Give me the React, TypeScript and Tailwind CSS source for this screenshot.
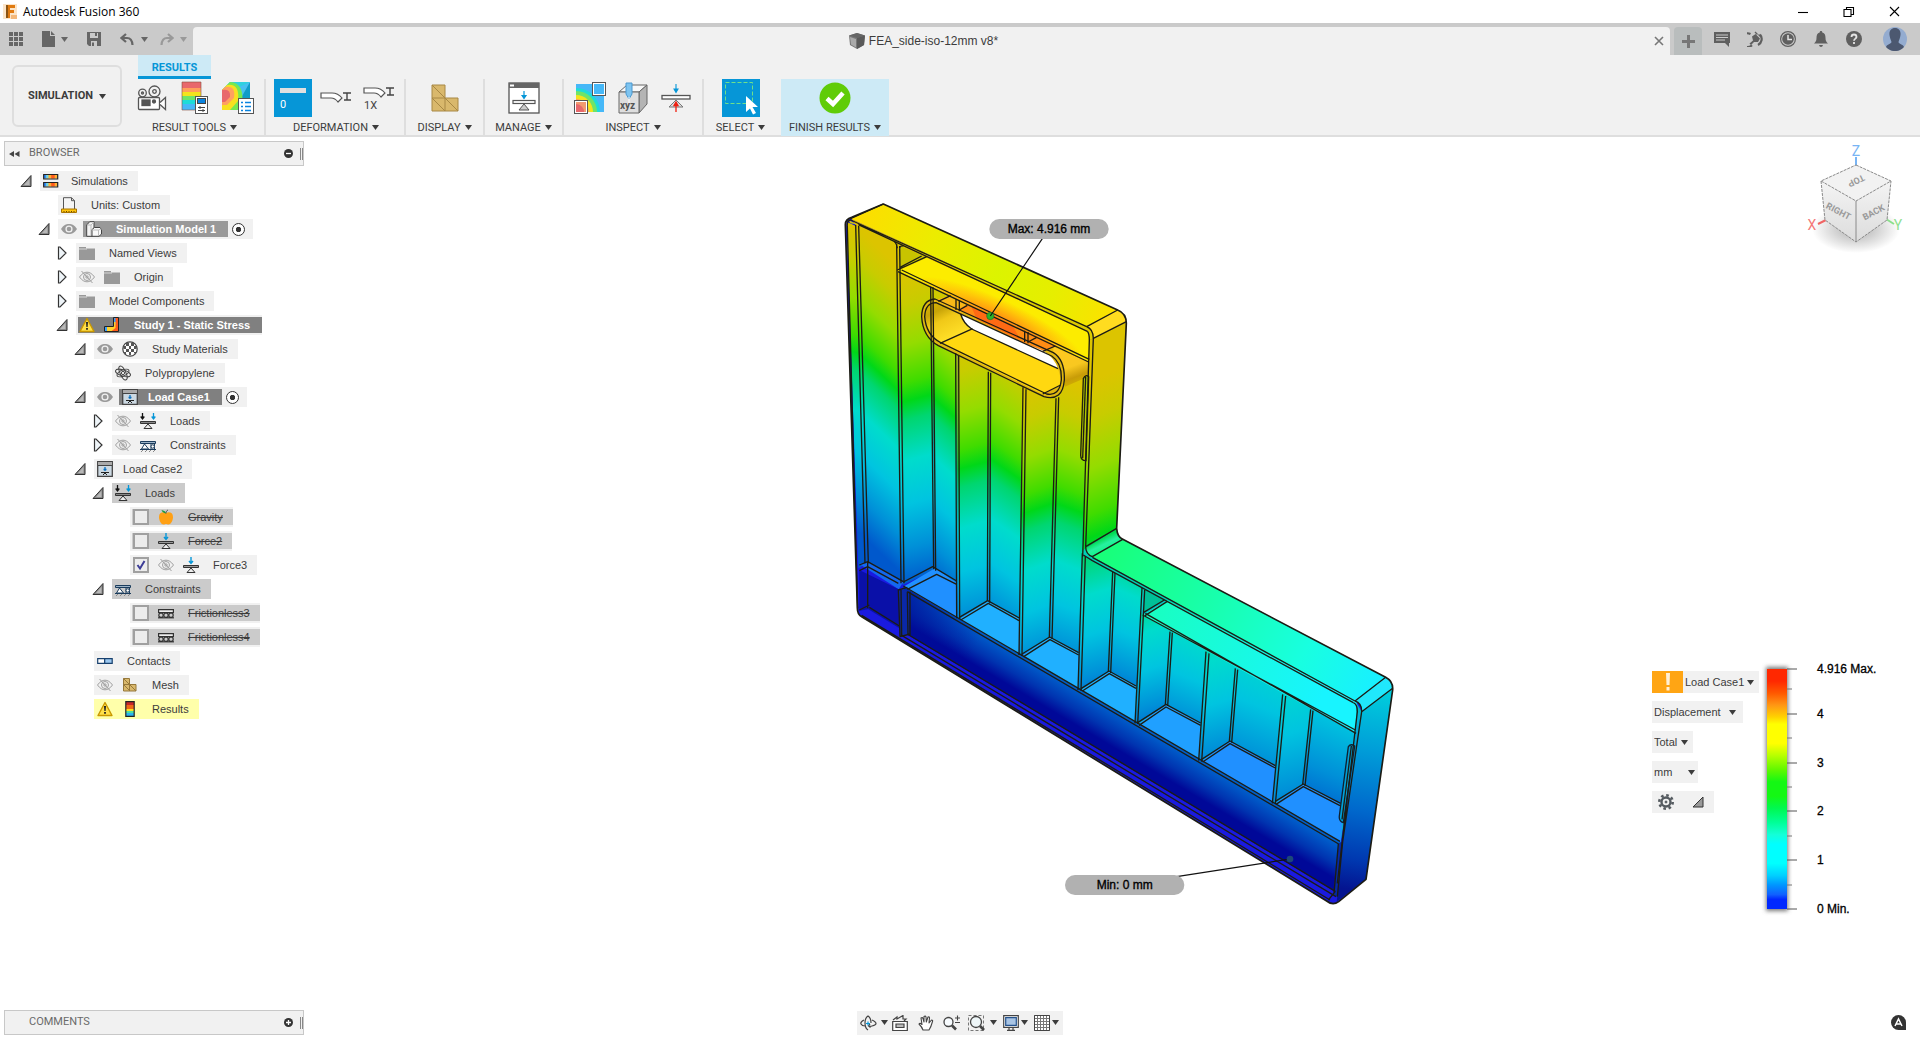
import React, { useState } from "react";

type Tone = "plain" | "dark" | "darker" | "selected" | "struck" | "warn";

type Node = {
  id: string;
  level: number;
  label: string;
  arrow?: "open" | "closed";
  eye?: "on" | "off";
  icon: string;
  tone?: Tone;
  check?: boolean;
  radio?: boolean;
  warning?: boolean;
};

const nodes: Node[] = [
  { id: "sims", level: 0, label: "Simulations", arrow: "open", icon: "sims" },
  { id: "units", level: 1, label: "Units: Custom", icon: "units" },
  { id: "model", level: 1, label: "Simulation Model 1", arrow: "open", eye: "on", icon: "body", tone: "dark", radio: true },
  { id: "views", level: 2, label: "Named Views", arrow: "closed", icon: "folder" },
  { id: "origin", level: 2, label: "Origin", arrow: "closed", eye: "off", icon: "folder" },
  { id: "comps", level: 2, label: "Model Components", arrow: "closed", icon: "folder" },
  { id: "study", level: 2, label: "Study 1 - Static Stress", arrow: "open", icon: "stress", tone: "darker", warning: true },
  { id: "materials", level: 3, label: "Study Materials", arrow: "open", eye: "on", icon: "materials" },
  { id: "poly", level: 4, label: "Polypropylene", icon: "atom" },
  { id: "case1", level: 3, label: "Load Case1", arrow: "open", eye: "on", icon: "loadcase", tone: "darker", radio: true },
  { id: "loads1", level: 4, label: "Loads", arrow: "closed", eye: "off", icon: "loads" },
  { id: "cons1", level: 4, label: "Constraints", arrow: "closed", eye: "off", icon: "constraints" },
  { id: "case2", level: 3, label: "Load Case2", arrow: "open", icon: "loadcase" },
  { id: "loads2", level: 4, label: "Loads", arrow: "open", icon: "loads", tone: "selected" },
  { id: "gravity", level: 5, label: "Gravity", icon: "gravity", tone: "struck", check: false },
  { id: "force2", level: 5, label: "Force2", icon: "force", tone: "struck", check: false },
  { id: "force3", level: 5, label: "Force3", eye: "off", icon: "force", check: true },
  { id: "cons2", level: 4, label: "Constraints", arrow: "open", icon: "constraints", tone: "selected" },
  { id: "fric3", level: 5, label: "Frictionless3", icon: "rollers", tone: "struck", check: false },
  { id: "fric4", level: 5, label: "Frictionless4", icon: "rollers", tone: "struck", check: false },
  { id: "contacts", level: 3, label: "Contacts", icon: "contacts" },
  { id: "mesh", level: 3, label: "Mesh", eye: "off", icon: "mesh" },
  { id: "results", level: 3, label: "Results", icon: "results", tone: "warn", warning: true },
];

const indent = ["pl-3", "pl-[30px]", "pl-12", "pl-[66px]", "pl-[84px]", "pl-[102px]"];

const Caret = ({ className = "text-[#3c3c3c]" }: { className?: string }) => (
  <svg width="7" height="5" viewBox="0 0 7 5" className={`shrink-0 ${className}`} aria-hidden="true">
    <path d="M0 0h7L3.500 5z" fill="currentColor" />
  </svg>
);

const Eye = ({ off }: { off?: boolean }) => (
  <svg width="16" height="16" viewBox="0 0 16 16" fill="none" className="block" aria-hidden="true">
    {off ? (
      <g stroke="#a0a0a0" strokeWidth="1">
        <path d="M.5 8C3 4.500 5.500 3.200 8 3.200S13 4.500 15.500 8C13 11.500 10.500 12.800 8 12.800S3 11.500.5 8z" />
        <circle cx="8" cy="8" r="3.500" />
        <circle cx="8" cy="8" r="1.200" />
        <path d="M2.500 2l11 12" />
      </g>
    ) : (
      <>
        <path d="M0 8C2.500 4 5 3 8 3s5.500 1 8 5c-2.500 4-5 5-8 5S2.500 12 0 8z" fill="#9a9a9a" />
        <circle cx="8" cy="8" r="3.600" fill="#f1f1f1" />
        <circle cx="8" cy="8" r="2.300" fill="#9a9a9a" />
      </>
    )}
  </svg>
);

const Warning = () => (
  <svg width="16" height="16" viewBox="0 0 16 16" className="block" aria-hidden="true">
    <path d="M8 1.500L15 14.500H1z" fill="#ffe04a" stroke="#c99700" strokeWidth="1.400" strokeLinejoin="round" />
    <path d="M7 5h2l-.4 5H7.400zM7.100 11h1.800v1.800H7.100z" fill="#222" />
  </svg>
);

const Ramp = ({ x, y, w, h }: { x: number; y: number; w: number; h: number }) => (
  <>
    <rect x={x} y={y} width={w} height={h} fill="#ffb030" />
    <rect x={x} y={y} width={w * 0.2} height={h} fill="#2e8cff" />
    <rect x={x + w * 0.2} y={y} width={w * 0.15} height={h} fill="#6ad8e8" />
    <rect x={x + w * 0.55} y={y} width={w * 0.25} height={h} fill="#ff5a1e" />
  </>
);

const treeIcons: Record<string, React.ReactNode> = {
  sims: (
    <>
      <Ramp x={0.5} y={1.5} w={14} h={4} />
      <Ramp x={0.5} y={9.5} w={14} h={4} />
      <path d="M.7 1.500h14v4.500H.7zM.7 9.500h14V14H.7z" stroke="#222" strokeWidth="1.200" />
    </>
  ),
  units: (
    <>
      <path d="M2.500.7h8l3 3v9h-11z" fill="#f5f5f5" stroke="#555" />
      <path d="M10.500.7v3h3" stroke="#555" />
      <path d="M.5 12h15v3.500H.5z" fill="#ffc40c" stroke="#a87400" />
      <path d="M3 14v1M5.500 14v1M8 14v1M10.500 14v1M13 14v1" stroke="#664400" />
    </>
  ),
  body: (
    <>
      <path d="M.7 4l3-3.300H8V8l-2 7.300H.7z" fill="#f4f4f4" stroke="#444" />
      <path d="M1 4h4l3-3M5 4v11" stroke="#bbb" />
      <path d="M6 8.500l2.500-2H14l1.500 2v4.500L13 15.300H6z" fill="#f8f8f8" stroke="#444" />
      <path d="M6 9h6.500l3-1M12.500 9v6" stroke="#bbb" />
    </>
  ),
  folder: (
    <>
      <path d="M0 2h7v1.500h9V15H0z" fill="#999" />
      <path d="M0 4h8" stroke="#d8d8d8" />
    </>
  ),
  stress: (
    <>
      <path d="M9.500.5h5v14h-14v-5h9z" fill="#ff5a1c" />
      <path d="M9.500.5h2v7h-2zM.5 9.500h2.500v5H.5z" fill="#3aa0ff" />
      <path d="M3 9.500h6.500V5h2v6L7 14.500H3z" fill="#ffd22e" />
      <path d="M9.500.5h5v14h-14v-5h9z" stroke="#222" />
    </>
  ),
  materials: (
    <>
      <circle cx="8" cy="8" r="7.200" fill="#fff" stroke="#444" strokeWidth="1.200" />
      <path d="M4 2h3v3H4zM9 2h3v3H9zM1.500 5H4v3H1.500zM7 5h2v3H7zM12 5h2.500v3H12zM4 8h3v3H4zM9 8h3v3H9zM2 11h2v2H2zM7 11h2v3H7zM12 11h2v1.500h-2z" fill="#555" />
    </>
  ),
  atom: (
    <g stroke="#444" strokeWidth="1">
      <ellipse cx="8" cy="8" rx="7.800" ry="3" transform="rotate(18 8 8)" />
      <ellipse cx="8" cy="8" rx="7.500" ry="2.800" transform="rotate(65 8 8)" />
      <ellipse cx="8" cy="8" rx="6.500" ry="3" transform="rotate(-25 8 8)" />
      <circle cx="8" cy="8" r="1.600" fill="#fff" />
    </g>
  ),
  loadcase: (
    <>
      <path d="M.7.700h14.600v14.600H.7z" fill="#ccd9e2" stroke="#444" strokeWidth="1.300" />
      <path d="M1 1h14v3H1z" fill="#aaa" />
      <path d="M1 4.500h14" stroke="#444" />
      <path d="M8 6v4M6.500 8.500h3" stroke="#0a70c0" strokeWidth="1.300" />
      <path d="M4 11.500h8M6 14l2-2 2 2" stroke="#222" />
    </>
  ),
  loads: (
    <>
      <path d="M2.500 0v5M.7 3.500l1.800 2.500 1.800-2.500" stroke="#111" strokeWidth="1.300" />
      <path d="M13.500 0v5M11.700 3.500l1.800 2.500 1.800-2.500" stroke="#0696d7" strokeWidth="1.300" />
      <path d="M.5 8.500h15v2H.5z" fill="#888" stroke="#333" />
      <path d="M8 11l4 4.500H4z" fill="#eee" stroke="#333" />
    </>
  ),
  force: (
    <>
      <path d="M8 0v6M6 4l2 2.500L10 4" stroke="#0696d7" strokeWidth="1.400" />
      <path d="M.5 8.500h15v2H.5z" fill="#999" stroke="#333" />
      <path d="M8 11l4 4.500H4z" fill="#eee" stroke="#333" />
    </>
  ),
  constraints: (
    <>
      <path d="M.5 4.500h15v2H.5z" fill="#9db4c8" stroke="#1b3c5c" />
      <path d="M4.500 7l4 5h-7z" fill="#fff" stroke="#1b3c5c" />
      <path d="M11 7v5M14.500 7v5" stroke="#1b3c5c" />
      <circle cx="12.700" cy="9.500" r="1.700" fill="#fff" stroke="#1b3c5c" />
      <path d="M0 12.500h16" stroke="#1b3c5c" />
      <path d="M1 15l2-2M5 15l2-2M9 15l2-2M13 15l2-2" stroke="#888" />
    </>
  ),
  rollers: (
    <g stroke="#333" strokeWidth="1.200">
      <path d="M.6 4.600h14.800v3H.6z" fill="#eee" />
      <circle cx="3" cy="10.200" r="2.200" />
      <circle cx="8" cy="10.200" r="2.200" />
      <circle cx="13" cy="10.200" r="2.200" />
      <path d="M0 12.800h16" />
    </g>
  ),
  gravity: (
    <>
      <path d="M8 4c3-1.500 7-.5 7 4 0 4-2.500 7.500-4.500 7.500-1 0-1.500-.5-2.500-.5s-1.500.5-2.500.5C3.500 15.500 1 12 1 8c0-4.500 4-5.500 7-4z" fill="#ffa014" />
      <path d="M8 4.500C8 3 7 2 3.500 1c.5 2 2 3 4.500 3.500z" fill="#1b9a3c" />
      <path d="M8 4.500c0-2 .8-3 2-3.500" stroke="#555" />
    </>
  ),
  contacts: (
    <>
      <path d="M.7 5.700h7v4.600h-7z" fill="#fff" stroke="#17406e" strokeWidth="1.200" />
      <path d="M7.700 5.700h7.500v4.600H7.700z" fill="#9cc8f0" stroke="#17406e" strokeWidth="1.200" />
    </>
  ),
  mesh: (
    <>
      <path d="M1.500 1.500h6v6h6.500v6.500H1.500z" fill="#d9b86c" stroke="#96783a" />
      <path d="M1.500 7.500h6v6.500M1.500 1.500l6 6M1.500 7.500L8 14M7.500 7.500L14 14" stroke="#96783a" />
    </>
  ),
  results: (
    <>
      <path d="M4 1h8v3H4z" fill="#c82828" />
      <path d="M4 4h8v4H4z" fill="#f06a18" />
      <path d="M4 8h8v2H4z" fill="#ffe020" />
      <path d="M4 10h8v2H4z" fill="#4ce0a0" />
      <path d="M4 12h8v3H4z" fill="#2eb4f0" />
      <path d="M3.800.7h8.400v14.600H3.800z" stroke="#222" strokeWidth="1.200" />
    </>
  ),
};

const TreeRow = ({ node, checked, onToggle }: { node: Node; checked: boolean; onToggle: () => void }) => {
  const tone = node.tone || "plain";
  const boxed = tone === "dark" || tone === "darker";
  const rowBg = tone === "selected" ? "bg-[#cbcbcb]" : tone === "warn" ? "bg-[#ffffaa]" : "bg-[#f1f1f1]";
  const innerBg = tone === "dark" ? "bg-[#999999]" : tone === "darker" ? "bg-[#808080]" : tone === "struck" ? "bg-[#cbcbcb]" : "";
  const wholeBox = tone === "struck" || (boxed && !node.eye);

  return (
    <li className={`flex h-5 items-center ${indent[node.level]}`}>
      <span className="flex w-6 justify-center pr-1">
        {node.arrow && (
          <button type="button" aria-label={`Expand ${node.label}`}>
            <svg width="12" height="14" viewBox="0 0 12 14" className="block">
              {node.arrow === "open" ? (
                <>
                  <path d="M11 1.500v11H1z" fill="#8a8a8a" stroke="#333" strokeWidth="1" />
                  <path d="M9.500 5v6H4z" fill="#b8b8b8" />
                </>
              ) : (
                <path d="M2.500 1h1.500l6 6-6 6H2.500z" fill="#eef4f8" stroke="#333" strokeWidth="1.200" />
              )}
            </svg>
          </button>
        )}
      </span>
      <div className={`flex h-5 items-center ${rowBg} ${wholeBox ? "pl-0.5" : "pl-[3px]"}`}>
        {node.eye && node.check === undefined && (
          <button type="button" aria-label={`Toggle ${node.label}`} className={boxed ? "mr-1.5" : "mr-[9px]"}>
            <Eye off={node.eye === "off"} />
          </button>
        )}
        <div className={`flex items-center ${boxed || tone === "struck" ? "h-4" : "h-5"} ${boxed ? "pr-3" : "pr-2.5"} ${boxed && !wholeBox ? "pl-[3px]" : ""} ${wholeBox ? "pl-px" : ""} ${innerBg}`}>
          {node.check !== undefined && (
            <label className="relative mr-[9px] block size-4">
              <input
                type="checkbox"
                aria-label={node.label}
                checked={checked}
                onChange={onToggle}
                className="block size-4 appearance-none border-2 border-[#a0a0a0] bg-[#ececec]"
              />
              {checked && (
                <svg width="16" height="16" viewBox="0 0 16 16" className="pointer-events-none absolute inset-0">
                  <path d="M4.500 8l2.500 3.500L11.500 4" fill="none" stroke="#3c3c96" strokeWidth="2" />
                </svg>
              )}
            </label>
          )}
          {node.eye && node.check !== undefined && (
            <button type="button" aria-label={`Toggle ${node.label}`} className="mr-[9px]">
              <Eye off={node.eye === "off"} />
            </button>
          )}
          {node.warning && (
            <span className="mr-[9px]">
              <Warning />
            </span>
          )}
          <svg
            width="16"
            height="16"
            viewBox="0 0 16 16"
            fill="none"
            className={`shrink-0 ${node.icon === "loadcase" ? "mr-2.5" : node.icon === "sims" ? "mr-3" : "mr-3.5"}`}
            aria-hidden="true"
          >
            {treeIcons[node.icon]}
          </svg>
          <span
            className={`text-[11px] leading-4 whitespace-nowrap ${boxed ? "font-bold text-white" : "text-[#3c3c3c]"} ${
              tone === "struck" ? "line-through" : ""
            }`}
          >
            {node.label}
          </span>
        </div>
        {node.radio && (
          <input
            type="radio"
            name={node.id}
            aria-label={`Activate ${node.label}`}
            defaultChecked
            className="mr-2 ml-1 size-[13px] appearance-none rounded-full border border-[#333] bg-white checked:bg-[radial-gradient(#333_32%,white_38%)]"
          />
        )}
      </div>
    </li>
  );
};

const PanelHeader = ({ title, sign }: { title: string; sign: "plus" | "minus" }) => (
  <header className="flex h-[25px] items-center border border-[#c8c8c8] bg-[#f1f1f1] text-[11px] text-[#6a6a6a]">
    {sign === "minus" && (
      <button type="button" aria-label="Collapse" className="ml-1">
        <svg width="11" height="8" viewBox="0 0 11 8">
          <path d="M5 1v6L0 4zM10.500 1v6l-5-3z" fill="#444" />
        </svg>
      </button>
    )}
    <h2 className={sign === "minus" ? "ml-[9px] font-[Roboto]" : "ml-6 font-[Roboto]"}>{title}</h2>
    <button type="button" aria-label={`${title} options`} className="ml-auto">
      <svg width="9" height="9" viewBox="0 0 9 9">
        <circle cx="4.500" cy="4.500" r="4.500" fill="#333" />
        <path d={sign === "plus" ? "M2 4.500h5M4.500 2v5" : "M2 4.500h5"} stroke="#fff" strokeWidth="1.300" />
      </svg>
    </button>
    <span className="ml-[7px] h-3 w-[3px] border-x border-[#888]" />
  </header>
);

/* ---------- ribbon ---------- */

const ToolButton = ({ label, active, children }: { label: string; active?: boolean; children: React.ReactNode }) => (
  <button type="button" aria-label={label} className={`flex size-[38px] items-center justify-center ${active ? "bg-[#0696d7]" : ""}`}>
    {children}
  </button>
);

const RibbonGroup = ({ title, className, children }: { title: string; className: string; children: React.ReactNode }) => (
  <div className={`flex h-[57px] flex-col items-center ${className}`}>
    <div className="flex gap-[5px]">{children}</div>
    <button type="button" className="mt-[3px] flex h-[15px] items-center gap-1 font-[Roboto] text-[11px] leading-none whitespace-nowrap text-[#3c3c3c]">
      {title}
      <Caret />
    </button>
  </div>
);

const separator = "border-r-2 border-[#dedede]";

const Camera = () => (
  <svg width="30" height="26" viewBox="0 0 30 26" fill="none" stroke="#555" strokeWidth="1.300">
    <circle cx="5.500" cy="8" r="3.800" />
    <circle cx="5.500" cy="8" r="1" />
    <circle cx="17.500" cy="6.500" r="5.500" />
    <circle cx="17.500" cy="6.500" r="1.800" />
    <rect x="1.500" y="12.500" width="21" height="12" rx="1" fill="#fff" />
    <rect x="5" y="15" width="8" height="5.500" fill="#555" />
    <circle cx="17" cy="16.500" r="1.500" fill="#555" />
    <path d="M23 17.500l5.500-5v12l-5.500-5" fill="#fff" />
  </svg>
);

const LegendTool = () => (
  <svg width="28" height="34" viewBox="0 0 28 34">
    <path d="M1 1h19v6H1z" fill="#e8686c" />
    <path d="M1 7h19v4H1z" fill="#ffa05a" />
    <path d="M1 11h19v4H1z" fill="#f4e41c" />
    <path d="M1 15h19v4H1z" fill="#70e468" />
    <path d="M1 19h19v4H1z" fill="#1edcd8" />
    <path d="M1 23h19v6H1z" fill="#46b8f8" />
    <path d="M1 1h19v28H1z" fill="none" stroke="#8a5040" strokeOpacity=".6" />
    <rect x="14.500" y="15.500" width="12" height="17" fill="#fff" stroke="#555" />
    <rect x="16.500" y="17.500" width="8" height="5" fill="#0a84e0" stroke="#444" />
    <path d="M17 26.500h7M17 29.500h7M19 25v3M22 28v3" stroke="#444" />
  </svg>
);

const Contours = () => (
  <svg width="34" height="34" viewBox="0 0 34 34">
    <path d="M9 1h20l-9 8-19 1z" fill="#30d0e0" />
    <path d="M29 1v26l-9 2V9z" fill="#109cc8" />
    <path d="M29 1L12 9l8 8z" fill="#48c0f0" />
    <path d="M1 9l8-8 11 8v20H1z" fill="#30d8d8" />
    <path d="M1 9L9 1Q24 2 21 24l-5 5H1z" fill="#78e850" />
    <path d="M1 9l5-5Q19 2 17 20L9 29H1z" fill="#f8e020" />
    <path d="M1 9l3-3Q15 4 13 17L6 24H1z" fill="#ffa060" />
    <path d="M1 9q9-2 8 7l-5 5H1z" fill="#e8686c" />
    <rect x="17.500" y="17.500" width="15" height="15" fill="#fff" stroke="#555" />
    <path d="M20 21.500h2M20 25.500h2M20 29.500h2M24 21.500h6M24 25.500h6M24 29.500h6" stroke="#0a84e0" strokeWidth="1.400" />
  </svg>
);

const Bend = ({ note }: { note?: boolean }) => (
  <svg width="32" height="34" viewBox="0 0 32 34" fill="none" stroke="#555" strokeWidth="1.200">
    <g transform={note ? "translate(0 -1)" : "translate(0 4)"}>
      <path d="M1 8h11q6 0 10 5l-4 4q-3-4-7-4H1z" fill="#fff" />
      <path d="M23 8h8M27 8v7M24 15h7" stroke="#444" strokeWidth="1.400" />
    </g>
    {note && (
      <text x="1" y="28" fill="#444" stroke="none" fontSize="11" fontFamily="Roboto, sans-serif">
        1X
      </text>
    )}
  </svg>
);

const MeshBlock = () => (
  <svg width="28" height="28" viewBox="0 0 28 28">
    <path d="M1 1h13v13h13v13H1z" fill="#d9b86c" stroke="#a88844" />
    <path d="M1 14h13v13M1 1l13 13M1 14l13 13M14 14l13 13" fill="none" stroke="#a88844" />
  </svg>
);

const ManageIcon = () => (
  <svg width="32" height="32" viewBox="0 0 32 32" fill="none">
    <rect x="1" y="1" width="30" height="30" fill="#fff" stroke="#555" strokeWidth="1.300" />
    <path d="M1 1h30v5H1z" fill="#666" />
    <path d="M2 2.500h4v2H2z" fill="#fff" />
    <path d="M16 9v6M14 13.500l2 3 2-3z" stroke="#0696d7" strokeWidth="1.200" fill="#0696d7" />
    <rect x="5" y="18.500" width="22" height="3" stroke="#555" strokeWidth="1.200" />
    <path d="M16 22l5 6H11z" fill="#ccc" stroke="#555" />
  </svg>
);

const CompareIcon = () => (
  <svg width="32" height="32" viewBox="0 0 32 32">
    <rect x="2" y="2" width="28" height="28" fill="#46b8f8" />
    <path d="M2 6a24 24 0 0124 24H2z" fill="#1edcd8" />
    <path d="M2 9a21 21 0 0121 21H2z" fill="#70e468" />
    <path d="M2 13a17 17 0 0117 17H2z" fill="#f4e41c" />
    <path d="M2 17a13 13 0 0113 13H2z" fill="#ffa05a" />
    <rect x="18.500" y=".5" width="13" height="13" fill="#46b8f8" stroke="#555" />
    <rect x="19.500" y="1.500" width="11" height="11" fill="none" stroke="#fff" />
    <rect x=".5" y="18.500" width="13" height="13" fill="#f29a70" stroke="#555" />
    <path d="M2 22a8 8 0 018 9H2z" fill="#e8686c" />
    <rect x="1.500" y="19.500" width="11" height="11" fill="none" stroke="#fff" />
  </svg>
);

const ProbeIcon = () => (
  <svg width="30" height="32" viewBox="0 0 30 32">
    <path d="M1 10l8-7h20l-8 7z" fill="#f8f8f8" stroke="#666" />
    <path d="M29 3v19l-8 9V10z" fill="#b4b4b4" stroke="#666" />
    <path d="M1 10h20v21H1z" fill="#dedede" stroke="#666" />
    <path d="M8 1h6v11l-3 5-3-5z" fill="#7ec4f0" stroke="#4a98d0" />
    <path d="M11 15v6" stroke="#fff" />
    <text x="2" y="27" fill="#555" fontSize="10" fontWeight="700" fontFamily="Roboto, sans-serif">
      xyz
    </text>
  </svg>
);

const ReactionIcon = () => (
  <svg width="30" height="30" viewBox="0 0 30 30" fill="none">
    <path d="M15 1v6M13 6l2 3.500L17 6z" fill="#0696d7" stroke="#0696d7" strokeWidth="1.100" />
    <rect x="1" y="12.500" width="28" height="3.500" fill="#fff" stroke="#555" strokeWidth="1.300" />
    <path d="M15 17l7 7H8z" fill="#ddd" stroke="#777" />
    <path d="M15 29v-8M13 22.500l2-3.500 2 3.500z" fill="#f02010" stroke="#f02010" strokeWidth="1.300" />
  </svg>
);

const SelectIcon = () => (
  <svg width="36" height="36" viewBox="0 0 36 36">
    <rect x="2.500" y="2.500" width="27" height="21" fill="none" stroke="#6ee08a" strokeWidth="1" strokeDasharray="4 2" />
    <path d="M23 16l12 11h-5.500l3.500 6-3 1.500-3-6-4 3.500z" fill="#fff" />
  </svg>
);

/* ---------- deformed part ---------- */

const rampStops: [number, string][] = [
  [0, "#dcc400"],
  [0.1, "#c8cc00"],
  [0.23, "#94dc00"],
  [0.35, "#40dc00"],
  [0.41, "#00d818"],
  [0.47, "#00d670"],
  [0.6, "#00dccc"],
  [0.74, "#00c4e0"],
  [0.88, "#0090d8"],
  [1, "#0058cc"],
];

// gx, gy: a point on the green contour; slope: the contour's dy/dx; scale: stretch of the field
type Face = { d: string; gx: number; gy: number; slope: number; scale: number };

const faces: Face[] = [
  { d: "M80 125L112 140L140 1150L115 1165Z", gx: 100, gy: 515, slope: 0.3, scale: 0.95 },
  { d: "M108 135L237 190L252 1212L138 1145Z", gx: 175, gy: 575, slope: 0.95, scale: 0.95 },
  { d: "M235 190L335 240L345 1170L248 1215Z", gx: 290, gy: 655, slope: -0.27, scale: 0.98 },
  { d: "M335 320L412 350L412 1220L345 1172Z", gx: 375, gy: 685, slope: 0.9, scale: 0.98 },
  { d: "M412 500L512 560L505 1265L412 1320Z", gx: 462, gy: 855, slope: -0.27, scale: 0.98 },
  { d: "M510 560L612 600L600 1325L505 1265Z", gx: 560, gy: 870, slope: 0.7, scale: 0.98 },
  { d: "M605 620L710 640L692 1375L598 1430Z", gx: 655, gy: 985, slope: -0.35, scale: 0.95 },
  { d: "M708 480L812 470L797 1120L780 1430L692 1375Z", gx: 750, gy: 985, slope: 0.37, scale: 0.95 },
  { d: "M788 1120L882 1175L868 1478L775 1534Z", gx: 840, gy: 1070, slope: -0.3, scale: 0.9 },
  { d: "M880 1172L972 1220L950 1527L868 1478Z", gx: 920, gy: 1075, slope: 0.4, scale: 0.9 },
  { d: "M964 1300L1052 1350L1040 1578L946 1634Z", gx: 1010, gy: 1190, slope: -0.3, scale: 0.85 },
  { d: "M1050 1345L1165 1405L1144 1637L1038 1578Z", gx: 1100, gy: 1190, slope: 0.4, scale: 0.95 },
  { d: "M1156 1405L1252 1455L1232 1688L1135 1745Z", gx: 1200, gy: 1250, slope: -0.3, scale: 1 },
  { d: "M1248 1455L1395 1535L1366 1767L1230 1688Z", gx: 1320, gy: 1200, slope: 0.4, scale: 1.2 },
  { d: "M1386 1535L1478 1580L1452 1818L1356 1872Z", gx: 1425, gy: 1260, slope: -0.3, scale: 1.25 },
  { d: "M1472 1582L1612 1655L1574 1882L1450 1818Z", gx: 1540, gy: 1220, slope: 0.4, scale: 1.25 },
  { d: "M820 475L919 425L890 1045L797 1105Z", gx: 845, gy: 1060, slope: -0.4, scale: 1.2 },
];

const floors = [
  "M250 1220L345 1165L410 1208L410 1318Z",
  "M416 1318L505 1263L599 1315L597 1425Z",
  "M604 1428L690 1372L777 1418L775 1530Z",
  "M780 1532L868 1474L948 1518L945 1630Z",
  "M950 1635L1038 1574L1143 1629L1137 1742Z",
  "M1140 1745L1230 1684L1366 1757L1357 1868Z",
  "M1362 1872L1450 1813L1572 1876L1562 1985Z",
];

const outline =
  "M76 135Q75 118 95 112L190 72L893 390Q919 400 919 430L890 1045Q892 1070 907 1077L1697 1492Q1720 1504 1718 1530L1638 2098L1556 2165Q1538 2178 1520 2163L125 1310Q112 1304 112 1285Z";
const gripOuter = "M345 357L700 518Q735 540 733 600Q728 665 672 650L355 497Q308 470 305 410Q306 360 345 357Z";

const edges = [
  // frame of the upper block
  "M90 117L190 72M92 120L800 440M115 134L802 454M800 440L893 390M820 475L919 425",
  "M92 120Q80 122 82 140L113 1285M107 135L135 1150M116 138L145 1150",
  "M800 440Q820 448 820 475L797 1100M802 454Q808 460 808 480L788 1130",
  // rib edges
  "M230 192L243 1210M239 198L252 1210M222 184Q230 190 232 205M250 198Q240 196 239 206",
  "M332 320L341 1168M339 322L347 1172",
  "M407 520L410 1315M416 528L419 1318",
  "M505 575L502 1263M512 578L509 1268",
  "M609 622L597 1425M618 628L606 1428",
  "M708 655L688 1373M716 652L696 1377",
  "M787 1120L774 1530M796 1128L783 1532",
  "M878 1175L865 1475M885 1179L872 1479",
  "M966 1224L945 1630M974 1230L953 1632",
  "M1050 1355L1036 1574M1057 1358L1043 1578",
  "M1158 1415L1136 1742M1167 1420L1145 1745",
  "M1246 1465L1228 1684M1253 1469L1235 1688",
  "M1388 1543L1357 1870M1397 1548L1366 1872",
  "M1472 1588L1448 1814M1479 1592L1455 1818",
  // floor borders
  "M250 1206L338 1160L410 1203M262 1228L350 1183L410 1213",
  "M418 1312L503 1262L598 1314M422 1320L505 1270L597 1322",
  "M606 1422L689 1371L776 1418M611 1430L690 1379L776 1425",
  "M783 1526L867 1473L948 1518M787 1533L868 1481L948 1525",
  "M953 1628L1038 1573L1142 1629M957 1636L1038 1581L1142 1636",
  "M1145 1738L1230 1683L1366 1757M1148 1746L1230 1691L1366 1764",
  "M1366 1864L1450 1812L1562 1870M1368 1873L1450 1820L1560 1877",
  // lower flange
  "M250 1218L1560 1984M262 1235L1556 1992M245 1366L1548 2150M262 1362L1546 2134M125 1306L1530 2160",
  "M118 1155L143 1145L250 1205M118 1172L143 1160L235 1210M143 1145L143 1285M118 1290L148 1275M148 1282L238 1338",
  "M235 1228L240 1370M243 1228L245 1368M262 1235L264 1362M270 1235L270 1365M240 1370L270 1362M235 1230L262 1222",
  "M1555 1992L1542 2140M1568 1985L1552 2150M1546 2134L1525 2160",
  // upper shelf
  "M232 270L320 230M240 262L305 228M234 275L806 546M245 270L808 538",
  // lower block
  "M817 1130L908 1078M797 1100L890 1045M817 1130Q797 1122 797 1100M790 1125L817 1142L1600 1568M817 1132L1605 1563",
  "M1605 1563L1697 1492M1625 1595L1718 1525M1605 1563Q1626 1570 1625 1595L1568 1985M1600 1568Q1612 1572 1612 1595L1552 2110",
  "M970 1298L1033 1260M975 1307L1042 1264M968 1305L1606 1650M976 1300L1608 1660",
];

const Part = () => (
  <svg width="560" height="720" viewBox="60 30 1680 2160" className="shrink-0" role="img" aria-label="Displacement plot">
    <defs>
      {faces.map((f, i) => {
        const k = 1 + f.slope * f.slope;
        const vx = (-f.slope * 960 * f.scale) / k;
        const vy = (960 * f.scale) / k;
        return (
          <linearGradient
            key={i}
            id={`face${i}`}
            gradientUnits="userSpaceOnUse"
            x1={f.gx - vx * 0.41}
            y1={f.gy - vy * 0.41}
            x2={f.gx + vx * 0.59}
            y2={f.gy + vy * 0.59}
          >
            {rampStops.map(([at, c]) => (
              <stop key={at} offset={at} stopColor={c} />
            ))}
          </linearGradient>
        );
      })}
      <linearGradient id="top" gradientUnits="userSpaceOnUse" x1="90" y1="100" x2="893" y2="440">
        <stop offset="0" stopColor="#ffdc00" />
        <stop offset=".3" stopColor="#ecec00" />
        <stop offset=".55" stopColor="#dcf400" />
        <stop offset=".75" stopColor="#e6ee00" />
        <stop offset="1" stopColor="#ffe000" />
      </linearGradient>
      <linearGradient id="lowerTop" gradientUnits="userSpaceOnUse" x1="850" y1="1100" x2="1650" y2="1530">
        <stop offset="0" stopColor="#18ff78" />
        <stop offset=".4" stopColor="#18ffac" />
        <stop offset=".75" stopColor="#18ffe0" />
        <stop offset="1" stopColor="#18f0ff" />
      </linearGradient>
      <linearGradient id="shelf" gradientUnits="userSpaceOnUse" x1="980" y1="1290" x2="1500" y2="1570">
        <stop offset="0" stopColor="#18ffc0" />
        <stop offset="1" stopColor="#18f4ff" />
      </linearGradient>
      <linearGradient id="lowerSide" gradientUnits="userSpaceOnUse" x1="1690" y1="1540" x2="1600" y2="2130">
        <stop offset="0" stopColor="#00ccdc" />
        <stop offset=".3" stopColor="#009cd8" />
        <stop offset=".6" stopColor="#0068cc" />
        <stop offset=".85" stopColor="#0038b0" />
        <stop offset="1" stopColor="#041490" />
      </linearGradient>
      <linearGradient id="flange" gradientUnits="userSpaceOnUse" x1="760" y1="1520" x2="703" y2="1616">
        <stop offset="0" stopColor="#0060cc" />
        <stop offset=".5" stopColor="#0034b0" />
        <stop offset=".85" stopColor="#000898" />
      </linearGradient>
      <linearGradient id="flangeFade" gradientUnits="userSpaceOnUse" x1="265" y1="1250" x2="480" y2="1380">
        <stop offset="0" stopColor="#001098" stopOpacity=".7" />
        <stop offset="1" stopColor="#001098" stopOpacity="0" />
      </linearGradient>
      <radialGradient id="heat" gradientUnits="userSpaceOnUse" cx="0" cy="0" r="1" gradientTransform="translate(530 428) rotate(25) scale(290 72)">
        <stop offset="0" stopColor="#ff6a10" />
        <stop offset=".35" stopColor="#ff9c10" />
        <stop offset=".7" stopColor="#ffc808" />
        <stop offset="1" stopColor="#fcec00" />
      </radialGradient>
      <linearGradient id="drum" gradientUnits="userSpaceOnUse" x1="330" y1="370" x2="385" y2="480">
        <stop offset="0" stopColor="#d8b400" />
        <stop offset=".25" stopColor="#c8a408" />
        <stop offset=".5" stopColor="#f0c818" />
        <stop offset="1" stopColor="#ffe028" />
      </linearGradient>
      <linearGradient id="drumOut" gradientUnits="userSpaceOnUse" x1="740" y1="505" x2="780" y2="610">
        <stop offset="0" stopColor="#ffc820" />
        <stop offset=".5" stopColor="#f8c820" />
        <stop offset=".8" stopColor="#c89c08" />
        <stop offset="1" stopColor="#d0b000" />
      </linearGradient>
      <linearGradient id="fillet" gradientUnits="userSpaceOnUse" x1="845" y1="1075" x2="862" y2="1110">
        <stop offset="0" stopColor="#00dc50" />
        <stop offset=".5" stopColor="#28f0a0" />
        <stop offset="1" stopColor="#10f888" />
      </linearGradient>
    </defs>

    {/* silhouette, also the bright bottom lip */}
    <path d={outline} fill="#1a1ae0" />
    <path d="M95 118L806 440L812 640L500 620L240 320Z" fill="#e8bc08" />
    <path d="M790 1115L1605 1560L1625 1595L1562 1986L950 1640L775 1535Z" fill="#00b8c8" />
    {faces.map((f, i) => (
      <path key={i} d={f.d} fill={`url(#face${i})`} />
    ))}
    <path d="M92 116L190 72L893 390L800 440Z" fill="url(#top)" />
    <path d="M84 120L800 440Q820 448 820 475L808 480L802 456L115 134L92 130Z" fill="#dccc00" />
    <path d="M800 440L893 390Q919 400 919 425L820 475Q818 448 800 440Z" fill="#ffdc20" />
    <path d="M808 480L820 475L797 1105L788 1130Z" fill="url(#face16)" />
    <path d="M797 1105L890 1045Q892 1070 908 1078L817 1130Q798 1124 797 1105Z" fill="url(#fillet)" />
    <path d="M817 1130L908 1078L1697 1492L1605 1563Z" fill="url(#lowerTop)" />
    <path d="M790 1110L797 1105Q800 1124 817 1130L1605 1563L1600 1572L812 1142L788 1128Z" fill="#00d0b8" />
    <path d="M1605 1563L1697 1492Q1720 1504 1718 1525L1625 1595Q1625 1570 1605 1563Z" fill="#20e8fc" />
    <path d="M1612 1600L1625 1595L1718 1525L1638 2098L1550 2165Z" fill="url(#lowerSide)" />

    {/* shelves */}
    <path d="M240 198L320 232L240 266Z" fill="#c8c400" />
    <path d="M234 272L320 233L806 456L808 547Z" fill="url(#heat)" />
    <path d="M972 1226L1036 1260L972 1298Z" fill="#00c098" />
    <path d="M968 1306L1042 1261L1610 1566L1606 1660Z" fill="url(#shelf)" />

    {floors.map((d, i) => (
      <path key={d} d={d} fill={i < 1 || i > 4 ? "#2090ff" : i === 4 ? "#20a0ff" : "#20b0ff"} />
    ))}

    {/* lower flange */}
    <path d="M250 1220L1562 1986L1546 2136L262 1364Z" fill="url(#flange)" />
    <path d="M250 1220L700 1480L690 1620L262 1364Z" fill="url(#flangeFade)" />
    <path d="M118 1152L143 1145L250 1206L236 1228Z" fill="#1468f0" />
    <path d="M118 1170L236 1228L238 1345L145 1288L118 1292Z" fill="#0a10a8" />
    <path d="M236 1228L266 1232L268 1362L240 1368Z" fill="#0a28a8" />
    <path d="M1556 1990L1568 1985L1552 2150L1540 2145Z" fill="#0428a8" />

    {/* grip opening */}
    <path d="M700 500L806 546L804 590L735 620Q738 560 700 520Z" fill="url(#drumOut)" />
    <path d={gripOuter} fill="#e0b810" />
    <path d="M340 366L415 392Q425 425 455 447L360 490Q318 465 314 410Q316 370 340 366Z" fill="url(#drum)" />
    <path d="M345 360L385 348L445 372L425 402Z" fill="#f8b818" />
    <path d="M415 388L440 374L640 462L710 498L670 514L610 490Z" fill="#ff8c14" />
    <path d="M455 382L580 440L600 478L470 418Z" fill="#ff6a14" />
    <path d="M422 402L610 488L670 512Q705 535 714 566L455 447Q430 430 422 402Z" fill="#fff" />
    <path d="M360 490L455 447L714 566Q724 590 720 618L668 642Z" fill="#ffd810" />

    {/* side slots */}
    <path d="M790 596Q797 582 806 590L798 842Q782 842 782 826Z" fill="#b4cc00" stroke="#20200c" strokeWidth="4" />
    <path d="M1585 1700Q1592 1690 1604 1698L1570 1928Q1556 1924 1558 1908Z" fill="#00a0d8" stroke="#102030" strokeWidth="4" />

    <g fill="none" stroke="#1c1c14" strokeWidth="4" strokeLinejoin="round">
      {edges.map((d) => (
        <path key={d} d={d} />
      ))}
      <path d={gripOuter} />
      <path d="M348 368L695 528Q726 548 724 600Q718 650 680 642L362 488Q318 465 314 410Q316 368 348 368Z" />
      <path d="M355 364L392 347M360 490L458 446M455 447L714 566M422 402Q430 430 455 447M668 514L706 498M668 642L722 615" />
      <path d="M408 358L408 390M418 362L418 394M418 390L442 376M614 452L614 486M624 456L624 490M624 486L650 472" />
      <path d="M797 590L788 835" />
      <path d="M1594 1698L1566 1918" />
      <path d={outline} strokeWidth="5" />
    </g>

    {/* callouts */}
    <circle cx="511" cy="408" r="11" fill="#28b428" stroke="#286428" strokeWidth="2" />
    <path d="M511 408L667 176M1410 2037L1070 2090" stroke="#111" strokeWidth="3.500" />
    <circle cx="1410" cy="2037" r="10" fill="#1c4878" />
    <rect x="508" y="117" width="358" height="60" rx="30" fill="#b1b1b1" />
    <rect x="735" y="2085" width="358" height="60" rx="30" fill="#b1b1b1" />
    <g fontFamily="'Liberation Sans', Arial, sans-serif" fontSize="36" fill="#000" stroke="#000" strokeWidth="1" textAnchor="middle">
      <text x="687" y="160">Max: 4.916 mm</text>
      <text x="914" y="2127">Min: 0 mm</text>
    </g>
  </svg>
);

/* ---------- right side of the viewport ---------- */

const ViewCube = () => (
  <svg width="110" height="116" viewBox="0 0 110 116" role="img" aria-label="View cube" fontFamily="Roboto, sans-serif">
    <defs>
      <radialGradient id="cubeShadow">
        <stop offset="0" stopColor="#888" stopOpacity=".7" />
        <stop offset="1" stopColor="#888" stopOpacity="0" />
      </radialGradient>
      <linearGradient id="cubeSide" x1="0" y1="0" x2="0" y2="1">
        <stop offset="0" stopColor="#f4f4f4" />
        <stop offset="1" stopColor="#dcdcdc" />
      </linearGradient>
    </defs>
    <ellipse cx="56" cy="86" rx="44" ry="24" fill="url(#cubeShadow)" />
    <path d="M56 14v9" stroke="#78b4f4" strokeWidth="2" />
    <path d="M26 77l-8 4" stroke="#f06464" strokeWidth="2" />
    <path d="M86 76l8 5" stroke="#8ce08c" strokeWidth="2" />
    <path d="M56 22l35 16-35 20-35-20z" fill="#f2f2f2" />
    <path d="M21 38l35 20v41L25 77z" fill="url(#cubeSide)" />
    <path d="M91 38L56 58v41l31-22z" fill="url(#cubeSide)" />
    <path d="M56 22l35 16-35 20-35-20zM21 38l4 39 31 22 31-22 4-39" fill="none" stroke="#8a8a8a" strokeWidth="1" strokeDasharray="3 1" />
    <path d="M56 58v41" stroke="#8a8a8a" />
    <g fontSize="9" fontWeight="700" fill="#9a9a9a" textAnchor="middle">
      <text transform="translate(37 71) rotate(28)">RIGHT</text>
      <text transform="translate(75 72) rotate(-28)">BACK</text>
      <text transform="translate(55 35) rotate(154)">TOP</text>
    </g>
    <g fontSize="14" textAnchor="middle">
      <text x="56" y="13" fill="#78b4f4">Z</text>
      <text x="12" y="87" fill="#f47878">X</text>
      <text x="98" y="87" fill="#90e090">Y</text>
    </g>
  </svg>
);

const barStops: [number, string][] = [
  [0, "#ff2800"],
  [0.05, "#ff2800"],
  [0.1, "#ff5800"],
  [0.15, "#ff9614"],
  [0.2, "#ffd200"],
  [0.23, "#ffff00"],
  [0.31, "#ffff00"],
  [0.36, "#b8ff00"],
  [0.42, "#60f800"],
  [0.47, "#14f814"],
  [0.53, "#14f814"],
  [0.58, "#00f850"],
  [0.64, "#00ff98"],
  [0.69, "#14ffd8"],
  [0.73, "#00ffff"],
  [0.81, "#00ffff"],
  [0.86, "#00d0ff"],
  [0.9, "#0096ff"],
  [0.94, "#1060ff"],
  [0.96, "#0028ff"],
  [1, "#0028ff"],
];
const ticks = [
  { y: 10, text: "4.916 Max." },
  { y: 55, text: "4" },
  { y: 104, text: "3" },
  { y: 152, text: "2" },
  { y: 201, text: "1" },
  { y: 250, text: "0 Min." },
];

const Legend = () => (
  <svg width="126" height="260" viewBox="0 0 126 260" role="img" aria-label="Legend">
    <defs>
      <linearGradient id="bar" x1="0" y1="0" x2="0" y2="1">
        {barStops.map(([at, c]) => (
          <stop key={at} offset={at} stopColor={c} />
        ))}
      </linearGradient>
      <filter id="soft" x="-50%" y="-10%" width="200%" height="120%">
        <feGaussianBlur stdDeviation="2" />
      </filter>
    </defs>
    <rect x="5" y="8" width="22" height="244" fill="#777" filter="url(#soft)" />
    <rect x="6" y="10" width="20" height="240" fill="url(#bar)" />
    {ticks.map((t) => (
      <g key={t.text}>
        <path d={`M26 ${t.y}h10`} stroke="#555" />
        <text x="56" y={t.y + 4} fontSize="12" fill="#000" stroke="#000" strokeWidth=".3" fontFamily="'Liberation Sans', Arial, sans-serif">
          {t.text}
        </text>
      </g>
    ))}
    <path d="M26 30h5M26 79h5M26 128h5M26 177h5M26 226h5" stroke="#777" />
  </svg>
);

const Picker = ({ label, options, className }: { label: string; options: string[]; className: string }) => (
  <label className={`flex h-[22px] items-center bg-[#f1f1f1] pl-0.5 ${className}`}>
    <select aria-label={label} className="min-w-0 flex-1 appearance-none bg-transparent text-[11px] text-[#3c3c3c] outline-none">
      {options.map((o) => (
        <option key={o}>{o}</option>
      ))}
    </select>
    <Caret />
  </label>
);

const App = () => {
  const [checks, setChecks] = useState<Record<string, boolean>>({ force3: true });

  return (
    <div className="flex min-h-screen flex-col overflow-hidden bg-white font-['Liberation_Sans',Arial,sans-serif] text-[#3c3c3c]">
      {/* title bar */}
      <div className="flex h-[23px] items-center pr-0.5 pl-[3px]">
        <svg width="14" height="15" viewBox="0 0 14 15" aria-hidden="true">
          <path d="M0 0h14v15H0z" fill="#fbe4c8" />
          <path d="M3 1h9v3H7v2h4v3H7v5H3z" fill="#e07a10" />
          <path d="M3 1h2v13H3z" fill="#8a5414" />
          <path d="M8 11h6v4H8z" fill="#f4b87a" />
        </svg>
        <h1 className="ml-1.5 font-['Open_Sans'] text-[12px] text-black">Autodesk Fusion 360</h1>
        <div className="ml-auto flex">
          {["M1 6.500h10", "M1 3.500h7v7H1zM3.500 3.500v-2h7v7h-2", "M1 1l9 9M10 1l-9 9"].map((d, i) => (
            <button key={d} type="button" aria-label={["Minimize", "Restore", "Close"][i]} className="flex h-[21px] w-[46px] items-center justify-center">
              <svg width="12" height="12" viewBox="0 0 12 12" fill="none" stroke="#000" strokeWidth="1.100">
                <path d={d} />
              </svg>
            </button>
          ))}
        </div>
      </div>

      {/* quick access and document tab */}
      <div className="flex h-8 bg-[#cacaca] pt-1">
        <div className="flex w-[193px] items-center pb-1 pl-[9px] text-[#666]">
          <button type="button" aria-label="Data panel">
            <svg width="14" height="14" viewBox="0 0 14 14" fill="currentColor">
              <path d="M0 0h4v4H0zM5 0h4v4H5zM10 0h4v4h-4zM0 5h4v4H0zM5 5h4v4H5zM10 5h4v4h-4zM0 10h4v4H0zM5 10h4v4H5zM10 10h4v4h-4z" />
            </svg>
          </button>
          <button type="button" aria-label="File" className="ml-[19px] flex items-center gap-1.5">
            <svg width="13" height="16" viewBox="0 0 13 16" fill="currentColor">
              <path d="M0 0h8v5h5v11H0z" />
              <path d="M9 0l4 4H9z" />
            </svg>
            <Caret className="text-[#666]" />
          </button>
          <button type="button" aria-label="Save" className="ml-[19px]">
            <svg width="14" height="14" viewBox="0 0 14 14">
              <path d="M0 0h14v14H2l-2-2z" fill="#666" />
              <path d="M3 1h8v5H3zM4 9h6v5H4z" fill="#cacaca" />
              <path d="M8 1h2v3H8zM5 10.500h2V14H5z" fill="#666" />
            </svg>
          </button>
          <button type="button" aria-label="Undo" className="ml-[19px] flex items-center gap-[7px]">
            <svg width="14" height="13" viewBox="0 0 14 13" fill="none" stroke="currentColor" strokeWidth="2.200">
              <path d="M6 1L1.500 5 6 9M1.500 5H7q5 0 5.500 7" />
            </svg>
            <Caret className="text-[#666]" />
          </button>
          <button type="button" aria-label="Redo" className="ml-3 flex items-center gap-1.5 text-[#999]">
            <svg width="14" height="13" viewBox="0 0 14 13" fill="none" stroke="currentColor" strokeWidth="2.200">
              <path d="M8 1l4.500 4L8 9M12.500 5H7q-5 0-5.500 7" />
            </svg>
            <Caret className="text-[#999]" />
          </button>
        </div>
        <div className="flex flex-1 items-center rounded-t bg-[#f1f1f1]">
          <div className="flex flex-1 items-center justify-center gap-1">
            <svg width="16" height="16" viewBox="0 0 16 16" aria-hidden="true">
              <path d="M8 0l8 2.500-1 9.500-7 4-7-4L0 2.500z" fill="#777" />
              <path d="M8 0l8 2.500L8 5 0 2.500z" fill="#666" />
              <path d="M8 5l8-2.500-1 9.500-7 4z" fill="#5a5a5a" />
              <path d="M1 4l6 2v8.500L2 11.500z" fill="#aaa" />
            </svg>
            <span className="text-[12px]">FEA_side-iso-12mm v8*</span>
          </div>
          <button type="button" aria-label="Close document" className="mr-1.5">
            <svg width="10" height="10" viewBox="0 0 10 10" stroke="#777" strokeWidth="1.600">
              <path d="M1 1l8 8M9 1L1 9" />
            </svg>
          </button>
        </div>
        <button type="button" aria-label="New document" className="ml-1 flex w-7 items-center justify-center rounded-t bg-[#b9bdbd]">
          <svg width="13" height="13" viewBox="0 0 13 13" stroke="#777" strokeWidth="3">
            <path d="M6.500 0v13M0 6.500h13" />
          </svg>
        </button>
        <div className="flex items-center gap-[17px] pr-[13px] pb-1 pl-3 text-[#5f5f5f]">
          <button type="button" aria-label="Comments">
            <svg width="16" height="15" viewBox="0 0 16 15">
              <path d="M0 0h16v11h-1v4l-4-4H0z" fill="currentColor" />
              <path d="M2 3h12M2 5.500h12M2 8h9" stroke="#cacaca" />
            </svg>
          </button>
          <button type="button" aria-label="Extensions">
            <svg width="16" height="16" viewBox="0 0 16 16">
              <path d="M5 14.200A6.800 6.800 0 113.500 3M11 14a6.800 6.800 0 002-10.500" fill="none" stroke="currentColor" strokeWidth="2.200" />
              <path d="M5 5.500L8.500 3l4.500 4.500-2 3.500-4 0-3 3-1.500-1.500L6 9.500z" fill="currentColor" />
              <path d="M8 1l2.500 2.500M11.500 3.500L14 6" stroke="currentColor" strokeWidth="1.400" />
            </svg>
          </button>
          <button type="button" aria-label="Job status">
            <svg width="16" height="16" viewBox="0 0 16 16">
              <circle cx="8" cy="8" r="7.400" fill="none" stroke="currentColor" strokeWidth="1.200" />
              <circle cx="8" cy="8" r="5.800" fill="currentColor" />
              <path d="M8 4v4.500h4" fill="none" stroke="#e4e4e4" strokeWidth="1.500" />
            </svg>
          </button>
          <button type="button" aria-label="Notifications">
            <svg width="16" height="16" viewBox="0 0 16 16" fill="currentColor">
              <path d="M8 0c1 0 1.300.7 1.300 1.500C12 2.200 12.500 4.500 12.500 7c0 3 1 4 2.500 5.500H1C2.500 11 3.500 10 3.500 7c0-2.500.5-4.800 3.200-5.500C6.700.7 7 0 8 0zM6 14h4q-.5 2-2 2t-2-2z" />
            </svg>
          </button>
          <button type="button" aria-label="Help">
            <svg width="16" height="16" viewBox="0 0 16 16">
              <circle cx="8" cy="8" r="8" fill="currentColor" />
              <path d="M5.500 6q0-2.500 2.500-2.500T10.500 6c0 1.500-2.500 1.800-2.500 3.800M8 11v2" fill="none" stroke="#e4e4e4" strokeWidth="1.800" />
            </svg>
          </button>
          <button type="button" aria-label="Account" className="ml-1">
            <svg width="24" height="24" viewBox="0 0 24 24">
              <circle cx="12" cy="12" r="12" fill="#94acd0" />
              <path d="M12 1c4 0 6 3 5.500 7-.3 3-1.500 5-2 7 .2 2 4.500 2 5.500 5a12 12 0 01-18 0c1-3 5-3 5.500-5-.5-2-1.700-4-2-7C6 4 8 1 12 1z" fill="#4c5870" />
            </svg>
          </button>
        </div>
      </div>

      {/* ribbon */}
      <div className="flex h-[82px] border-b-2 border-[#dedede] bg-[#f1f1f1]">
        <button
          type="button"
          className="mt-2.5 ml-3 flex h-[62px] w-[110px] items-center justify-center gap-1.5 rounded-md border-2 border-[#dedede] font-[Roboto] text-[11px] font-bold"
        >
          SIMULATION
          <Caret />
        </button>
        <div className="ml-[11px]">
          <button type="button" className="ml-[5px] block h-6 w-[73px] border-b-[3px] border-[#0696d7] bg-[#cdeaf6] pt-[3px] font-[Roboto] text-[11px] leading-none font-bold text-[#0696d7]">
            RESULTS
          </button>
          <div className="flex">
            <RibbonGroup title="RESULT TOOLS" className={`w-[133px] pr-2 ${separator}`}>
              <ToolButton label="Animate"><Camera /></ToolButton>
              <ToolButton label="Legend options"><LegendTool /></ToolButton>
              <ToolButton label="Deformation options"><Contours /></ToolButton>
            </RibbonGroup>
            <RibbonGroup title="DEFORMATION" className={`w-[140px] pl-0.5 ${separator}`}>
              <ToolButton label="Undeformed" active>
                <svg width="28" height="32" viewBox="0 0 28 32">
                  <path d="M1 6h26v5H1z" fill="#e0e0e0" />
                  <text x="1" y="26" fontSize="11" fill="#fff" fontFamily="Roboto, sans-serif">0</text>
                </svg>
              </ToolButton>
              <ToolButton label="Actual"><Bend /></ToolButton>
              <ToolButton label="Adjusted"><Bend note /></ToolButton>
            </RibbonGroup>
            <RibbonGroup title="DISPLAY" className={`w-[79px] ${separator}`}>
              <ToolButton label="Mesh"><MeshBlock /></ToolButton>
            </RibbonGroup>
            <RibbonGroup title="MANAGE" className={`w-[79px] ${separator}`}>
              <ToolButton label="Manage load cases"><ManageIcon /></ToolButton>
            </RibbonGroup>
            <RibbonGroup title="INSPECT" className={`w-[140px] ${separator}`}>
              <ToolButton label="Compare"><CompareIcon /></ToolButton>
              <ToolButton label="Point probe"><ProbeIcon /></ToolButton>
              <ToolButton label="Reactions"><ReactionIcon /></ToolButton>
            </RibbonGroup>
            <RibbonGroup title="SELECT" className="w-[77px] pr-1">
              <ToolButton label="Select" active><SelectIcon /></ToolButton>
            </RibbonGroup>
            <RibbonGroup title="FINISH RESULTS" className="w-[108px] bg-[#cdeaf6]">
              <ToolButton label="Finish results">
                <svg width="32" height="32" viewBox="0 0 32 32">
                  <circle cx="16" cy="16" r="15.500" fill="#60cc08" />
                  <path d="M8 16.500l6 5.500L24 11" fill="none" stroke="#fff" strokeWidth="4.500" />
                </svg>
              </ToolButton>
            </RibbonGroup>
          </div>
        </div>
      </div>

      {/* viewport */}
      <main className="flex flex-1">
        <aside className="w-[304px] shrink-0 pt-1 pl-1">
          <PanelHeader title="BROWSER" sign="minus" />
          <ul className="mt-[5px] flex flex-col gap-1">
            {nodes.map((n) => (
              <TreeRow key={n.id} node={n} checked={!!checks[n.id]} onToggle={() => setChecks({ ...checks, [n.id]: !checks[n.id] })} />
            ))}
          </ul>
        </aside>
        <section className="flex min-w-0 flex-1 items-start justify-center pt-[53px] pl-80">
          <Part />
        </section>
        <div className="flex w-[304px] shrink-0 flex-col pl-9">
          <div className="mt-1.5 mr-2.5 self-end">
            <ViewCube />
          </div>
          <div className="mt-auto mb-[91px] flex">
            <div className="mt-3 flex w-[109px] flex-col items-start gap-2">
              <div className="flex">
                <span className="flex h-[22px] w-[31px] items-center justify-center bg-[#ffa514]">
                  <svg width="6" height="18" viewBox="0 0 6 18">
                    <path d="M1 0h4l-.5 12h-3zM1.500 14h3v3.500h-3z" fill="#fff0d8" />
                  </svg>
                </span>
                <Picker label="Load case" options={["Load Case1", "Load Case2"]} className="w-[76px] pr-[5px]" />
              </div>
              <Picker label="Result" options={["Displacement", "Stress", "Strain"]} className="w-[91px] pr-[7px]" />
              <Picker label="Component" options={["Total", "X", "Y", "Z"]} className="w-[41px] pr-[5px]" />
              <Picker label="Unit" options={["mm", "in"]} className="w-[46px] pr-[3px]" />
              <div className="flex h-[22px] w-[62px] items-center gap-[18px] bg-[#f1f1f1] pl-1.5">
                <button type="button" aria-label="Legend settings">
                  <svg width="16" height="16" viewBox="0 0 16 16" fill="none" stroke="#555b60">
                    <circle cx="8" cy="8" r="4.500" strokeWidth="2.400" />
                    <circle cx="8" cy="8" r="6.700" strokeWidth="2.600" strokeDasharray="2.600 2.660" />
                    <circle cx="8" cy="8" r="1" fill="#555b60" />
                  </svg>
                </button>
                <button type="button" aria-label="Collapse legend">
                  <svg width="12" height="12" viewBox="0 0 12 12">
                    <path d="M11 1v10H1z" fill="#999" stroke="#333" />
                  </svg>
                </button>
              </div>
            </div>
            <Legend />
          </div>
        </div>
      </main>

      {/* bottom strip */}
      <footer className="flex items-center pb-[5px]">
        <div className="w-[304px] shrink-0 pl-1">
          <PanelHeader title="COMMENTS" sign="plus" />
        </div>
        <div className="flex flex-1 justify-center">
          <div className="flex h-6 items-center bg-[#f1f1f1] pr-1 pl-[3px]">
            <button type="button" aria-label="Orbit" className="flex items-center gap-1">
              <svg width="17" height="16" viewBox="0 0 17 16" fill="none" stroke="#444" strokeWidth="1.200">
                <path d="M8 15q-3-2-3-7t3-7q3 2 3 7M4 5Q0 7 1 9q1 2 4 2M12 5q4 2 4 3.500T12 11q-2 .5-3 0M10 9l-1.500 2 2 1.500" />
                <path d="M8 6.500v4M6 8.500h4" stroke="#0696d7" />
              </svg>
              <Caret />
            </button>
            <button type="button" aria-label="Look at" className="ml-1">
              <svg width="16" height="16" viewBox="0 0 16 16" fill="none" stroke="#444" strokeWidth="1.200">
                <path d="M.7 6.500h14.600v9H.7z" fill="#fff" />
                <path d="M4 9h8v3.500H4z" fill="#bbb" />
                <path d="M1 5l4-3v2l6-3.500V4h3l-2 2" />
              </svg>
            </button>
            <button type="button" aria-label="Pan" className="ml-2.5">
              <svg width="17" height="16" viewBox="0 0 17 16" fill="#fff" stroke="#444" strokeWidth="1.100" strokeLinejoin="round">
                <path d="M5 15q-1-3-4-6 1-1.500 3 .5L3 3q1.500-1 2 .5L6 7V1.500q1.500-1 2 .5l.3 5L10 2q1.500-.5 1.500 1L11 8l2.500-3q1.500 0 1 1.500Q13 12 11 15z" />
              </svg>
            </button>
            <button type="button" aria-label="Zoom" className="ml-2">
              <svg width="17" height="16" viewBox="0 0 17 16" fill="none" stroke="#444">
                <circle cx="5.500" cy="7" r="4.500" fill="#f8fcff" strokeWidth="1.300" />
                <path d="M9 10.500l4 4" strokeWidth="2.600" />
                <path d="M12 3h5M14.500.5v5M12 7.500h5" strokeWidth="1.100" />
              </svg>
            </button>
            <button type="button" aria-label="Fit" className="ml-2 flex items-center gap-[5px]">
              <svg width="17" height="16" viewBox="0 0 17 16" fill="none" stroke="#444">
                <path d="M.5.500h15v15H.5z" strokeDasharray="3 2" stroke="#777" />
                <circle cx="8" cy="7" r="5.500" fill="#eef6f8" strokeWidth="1.300" />
                <path d="M12 11l4 4" strokeWidth="2.600" />
              </svg>
              <Caret />
            </button>
            <button type="button" aria-label="Display settings" className="ml-1.5 flex items-center gap-0.5">
              <svg width="16" height="16" viewBox="0 0 16 16" fill="none" stroke="#444" strokeWidth="1.200">
                <path d="M.7.700h14.600v11.600H.7z" fill="#fff" />
                <path d="M2.700 2.700h10.600v7.600H2.700z" fill="#a8c4e4" stroke="#24528c" />
                <path d="M6 13v2M10 13v2M4 15.300h8" />
              </svg>
              <Caret />
            </button>
            <button type="button" aria-label="Grid settings" className="ml-1.5 flex items-center gap-0.5">
              <svg width="16" height="16" viewBox="0 0 16 16" fill="none" stroke="#777">
                <path d="M.5.500h15v15H.5zM3.500.500v15M6.500.500v15M9.500.500v15M12.500.500v15M.5 3.500h15M.5 6.500h15M.5 9.500h15M.5 12.500h15" fill="#fff" />
                <path d="M.5.500h15v15H.5z" stroke="#444" />
              </svg>
              <Caret />
            </button>
          </div>
        </div>
        <div className="flex w-[304px] justify-end pr-3.5">
          <button type="button" aria-label="Assistant">
            <svg width="15" height="15" viewBox="0 0 15 15">
              <path d="M7.500 0a7.500 7.500 0 017.500 7.500V15H7.500a7.500 7.500 0 010-15z" fill="#333" />
              <path d="M4 11l3.500-7 3.500 7M5.500 9h4" fill="none" stroke="#fff" strokeWidth="1.500" />
            </svg>
          </button>
        </div>
      </footer>
    </div>
  );
};

export default App;
